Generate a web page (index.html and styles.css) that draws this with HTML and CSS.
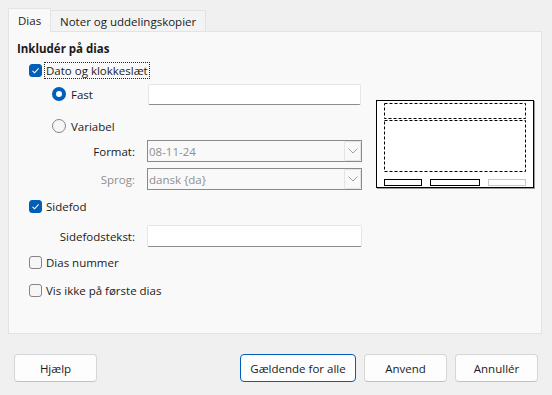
FILE: index.html
```html
<!DOCTYPE html>
<html lang="da">
<head>
<meta charset="utf-8">
<title>Sidehoved og sidefod</title>
<link rel="stylesheet" href="styles.css">
</head>
<body>
<div class="dialog">
  <div class="tabs">
    <div class="tab active">Dias</div>
    <div class="tab">Noter og uddelingskopier</div>
  </div>
  <div class="panel">
    <div class="form">
      <div class="row r-head"><span class="heading">Inkludér på dias</span></div>
      <div class="row r-date ind1">
        <span class="check on"><svg viewBox="0 0 13 13" width="13" height="13"><path d="M3.5 6.8 L5.6 8.8 L9.6 4.4" fill="none" stroke="#fff" stroke-width="1.1"/></svg></span>
        <span class="label focus">Dato og klokkeslæt</span>
      </div>
      <div class="row r-fast">
        <div class="ind2 radio-wrap"><span class="radio on"></span><span class="label">Fast</span></div>
        <div class="field text-input"></div>
      </div>
      <div class="row r-var ind2">
        <span class="radio"></span><span class="label">Variabel</span>
      </div>
      <div class="row r-format">
        <span class="flabel">Format:</span>
        <div class="field combo"><span class="val">08-11-24</span><span class="drop"><svg viewBox="0 0 10 6" width="10" height="6"><path d="M0.5 0.5 L5 5 L9.5 0.5" fill="none" stroke="#a0a0a0" stroke-width="1"/></svg></span></div>
      </div>
      <div class="row r-lang">
        <span class="flabel dis">Sprog:</span>
        <div class="field combo"><span class="val">dansk {da}</span><span class="drop"><svg viewBox="0 0 10 6" width="10" height="6"><path d="M0.5 0.5 L5 5 L9.5 0.5" fill="none" stroke="#a0a0a0" stroke-width="1"/></svg></span></div>
      </div>
      <div class="row r-foot ind1">
        <span class="check on"><svg viewBox="0 0 13 13" width="13" height="13"><path d="M3.5 6.8 L5.6 8.8 L9.6 4.4" fill="none" stroke="#fff" stroke-width="1.1"/></svg></span>
        <span class="label">Sidefod</span>
      </div>
      <div class="row r-foottext">
        <span class="flabel">Sidefodstekst:</span>
        <div class="field text-input"></div>
      </div>
      <div class="row r-num ind1">
        <span class="check"></span><span class="label">Dias nummer</span>
      </div>
      <div class="row r-first ind1">
        <span class="check"></span><span class="label">Vis ikke på første dias</span>
      </div>
    </div>
    <div class="preview">
      <svg class="pv-head" width="142" height="16" viewBox="0 0 142 16"><rect x="0.5" y="0.5" width="141" height="15" fill="none" stroke="#000" stroke-width="1" stroke-dasharray="3 2"/></svg>
      <svg class="pv-body" width="142" height="52" viewBox="0 0 142 52"><rect x="0.5" y="0.5" width="141" height="51" fill="none" stroke="#000" stroke-width="1" stroke-dasharray="3 2"/></svg>
      <div class="pv-foot">
        <span class="pv-box"></span>
        <span class="pv-box wide"></span>
        <span class="pv-box off"></span>
      </div>
    </div>
  </div>
  <div class="buttons">
    <button class="btn">Hjælp</button>
    <div class="btn-group">
      <button class="btn default wide">Gældende for alle</button>
      <button class="btn">Anvend</button>
      <button class="btn">Annullér</button>
    </div>
  </div>
</div>
</body>
</html>
```

FILE: styles.css
```css
* { box-sizing: border-box; }
html, body {
  margin: 0;
  padding: 0;
  background: #f0f0f0;
  width: 552px;
  height: 395px;
  overflow: hidden;
  font-family: "Open Sans", "Noto Sans", sans-serif;
  font-size: 11.5px;
  color: #1b1b1b;
}
.dialog { padding-top: 8px; }

.tabs {
  display: flex;
  align-items: flex-end;
  margin-left: 8px;
  height: 23px;
}
.tab {
  height: 21px;
  width: 155px;
  padding: 0 0 0 9px;
  white-space: nowrap;
  display: flex;
  align-items: center;
  background: #f3f3f3;
  border: 1px solid #e3e3e3;
  border-bottom: none;
  border-left: none;
}
.tab.active {
  width: 43px;
  height: 24px;
  margin-bottom: -1px;
  padding-bottom: 1px;
  background: #f9f9f9;
  border-left: 1px solid #e3e3e3;
  padding-left: 9px;
  position: relative;
  z-index: 1;
}

.panel {
  margin: 0 10px 0 8px;
  height: 303px;
  background: #f9f9f9;
  border: 1px solid #e3e3e3;
  display: flex;
  padding-left: 8px;
}
.form { width: 345px; flex: none; padding-top: 5px; }

.row {
  height: 22px;
  display: flex;
  align-items: center;
}
.heading { font-weight: 700; }
.ind1 { padding-left: 12px; }
.ind2 { padding-left: 35px; }

.r-fast { margin-top: 2px; }
.r-var { margin-top: 10px; }
.r-format { margin-top: 3px; }
.r-lang { margin-top: 6px; }
.r-foot { margin-top: 5px; }
.r-foottext { margin-top: 8px; }
.r-num { margin-top: 4px; }
.r-first { margin-top: 6px; }

.radio-wrap { display: flex; align-items: center; width: 130px; }

.check {
  width: 13px;
  height: 13px;
  border: 1px solid #858585;
  border-radius: 3px;
  background: #f6f6f6;
  display: inline-flex;
  flex: none;
}
.check.on {
  background: #005fb8;
  border-color: #005fb8;
}
.check.on svg { margin: -1px; }
.label { margin-left: 4px; }
.label.focus {
  margin-left: 3px;
  outline: 1px dotted #222;
  padding: 0 1px;
  line-height: 15px;
}

.radio {
  width: 14px;
  height: 14px;
  border-radius: 50%;
  border: 1px solid #858585;
  background: #f6f6f6;
  flex: none;
}
.radio.on {
  border: 4px solid #005fb8;
  background: #fff;
}
.radio + .label { margin-left: 5px; }

.flabel {
  width: 118px;
  text-align: right;
  margin-right: 12px;
}
.flabel.dis { color: #8f8f8f; }

.field { width: 215px; height: 22px; }
.text-input {
  background: #fff;
  border: 1px solid #e6e6e6;
  border-bottom: 1px solid #8c8c8c;
  border-radius: 2px;
}
.r-fast .text-input { margin-left: 1px; width: 213px; height: 21px; }
.combo {
  border: 1px solid #8a8a8a;
  background: #f9f9f9;
  display: flex;
  align-items: center;
  justify-content: space-between;
  color: #8f8f8f;
  padding-left: 1px;
}
.drop {
  width: 17px;
  height: 20px;
  border: 1px solid #e4e4e4;
  border-radius: 2px;
  display: flex;
  align-items: center;
  justify-content: center;
  background: #f9f9f9;
}

.preview {
  margin-top: 68px;
  margin-left: 14px;
  width: 158px;
  height: 88px;
  background: #fff;
  border: 1px solid #000;
  box-shadow: 1px 1px 0 #9a9a9a;
  padding: 2px 7px 0 7px;
}
.pv-head, .pv-body { display: block; }
.pv-body { margin-top: 1px; }
.pv-foot {
  margin-top: 7px;
  display: flex;
  justify-content: space-between;
}
.pv-box { width: 38px; height: 7px; border: 1px solid #000; }
.pv-box.wide { width: 50px; }
.pv-box.off { border-color: #c8c8c8; }

.buttons {
  display: flex;
  padding: 20px 14px 0 14px;
}
.btn-group { margin-left: auto; display: flex; gap: 8px; }
.btn {
  font: inherit;
  color: #1b1b1b;
  width: 83px;
  height: 28px;
  background: #fdfdfd;
  border: 1px solid #d6d6d6;
  border-bottom-color: #c2c2c2;
  border-radius: 4px;
  padding: 0;
}
.btn.wide { width: 116px; }
.btn.default { border-color: #005fb8; }
```
